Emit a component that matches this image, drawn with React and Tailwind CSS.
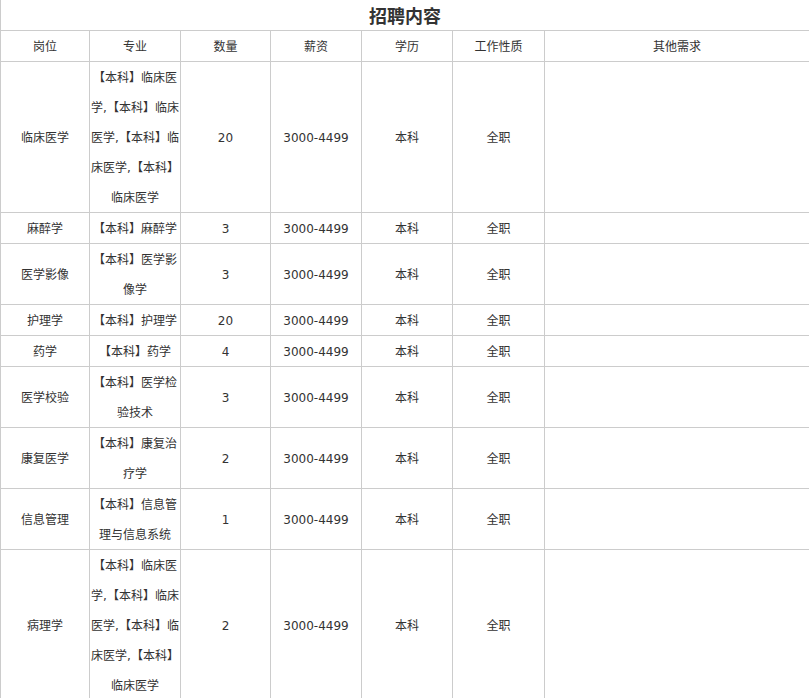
// 招聘内容 table
const majorLong = "【本科】临床医学,【本科】临床医学,【本科】临床医学,【本科】临床医学";

const rows = [
  { post: "临床医学", major: majorLong, count: "20" },
  { post: "麻醉学", major: "【本科】麻醉学", count: "3" },
  { post: "医学影像", major: "【本科】医学影像学", count: "3" },
  { post: "护理学", major: "【本科】护理学", count: "20" },
  { post: "药学", major: "【本科】药学", count: "4" },
  { post: "医学校验", major: "【本科】医学检验技术", count: "3" },
  { post: "康复医学", major: "【本科】康复治疗学", count: "2" },
  { post: "信息管理", major: "【本科】信息管理与信息系统", count: "1" },
  { post: "病理学", major: majorLong, count: "2" },
];

const headers = ["岗位", "专业", "数量", "薪资", "学历", "工作性质", "其他需求"];
const widths = [89, 91, 90, 91, 91, 92, 265];

const cell = "border border-[#cccccc] p-0 text-center align-middle leading-[30px]";

function Cell({ children }) {
  // small nudge so glyphs sit like the original SimSun rendering
  return (
    <td className={cell}>
      <span className="relative top-[1px]">{children}</span>
    </td>
  );
}

export default function App() {
  return (
    <div
      className="bg-white text-[#333333] text-[12px] overflow-hidden w-[809px]"
      style={{ fontFamily: '"DejaVu Sans", "Noto Sans CJK SC", sans-serif' }}
    >
      <table className="border-collapse table-fixed w-[810px]">
        <colgroup>
          {widths.map((w, i) => (
            <col key={i} style={{ width: w }} />
          ))}
        </colgroup>
        <tbody>
          <tr>
            <td
              colSpan={7}
              className="border-l border-r border-b border-[#cccccc] p-0 text-center align-middle h-[30px] leading-[30px] text-[18px] font-bold text-[#333333]"
              style={{ fontFamily: '"Noto Sans CJK SC", sans-serif' }}
            >
              招聘内容
            </td>
          </tr>
          <tr>
            {headers.map((h) => (
              <Cell key={h}>{h}</Cell>
            ))}
          </tr>
          {rows.map((r, i) => (
            <tr key={i}>
              <Cell>{r.post}</Cell>
              <Cell>{r.major}</Cell>
              <Cell>{r.count}</Cell>
              <Cell>3000-4499</Cell>
              <Cell>本科</Cell>
              <Cell>全职</Cell>
              <td className={cell}></td>
            </tr>
          ))}
        </tbody>
      </table>
    </div>
  );
}
